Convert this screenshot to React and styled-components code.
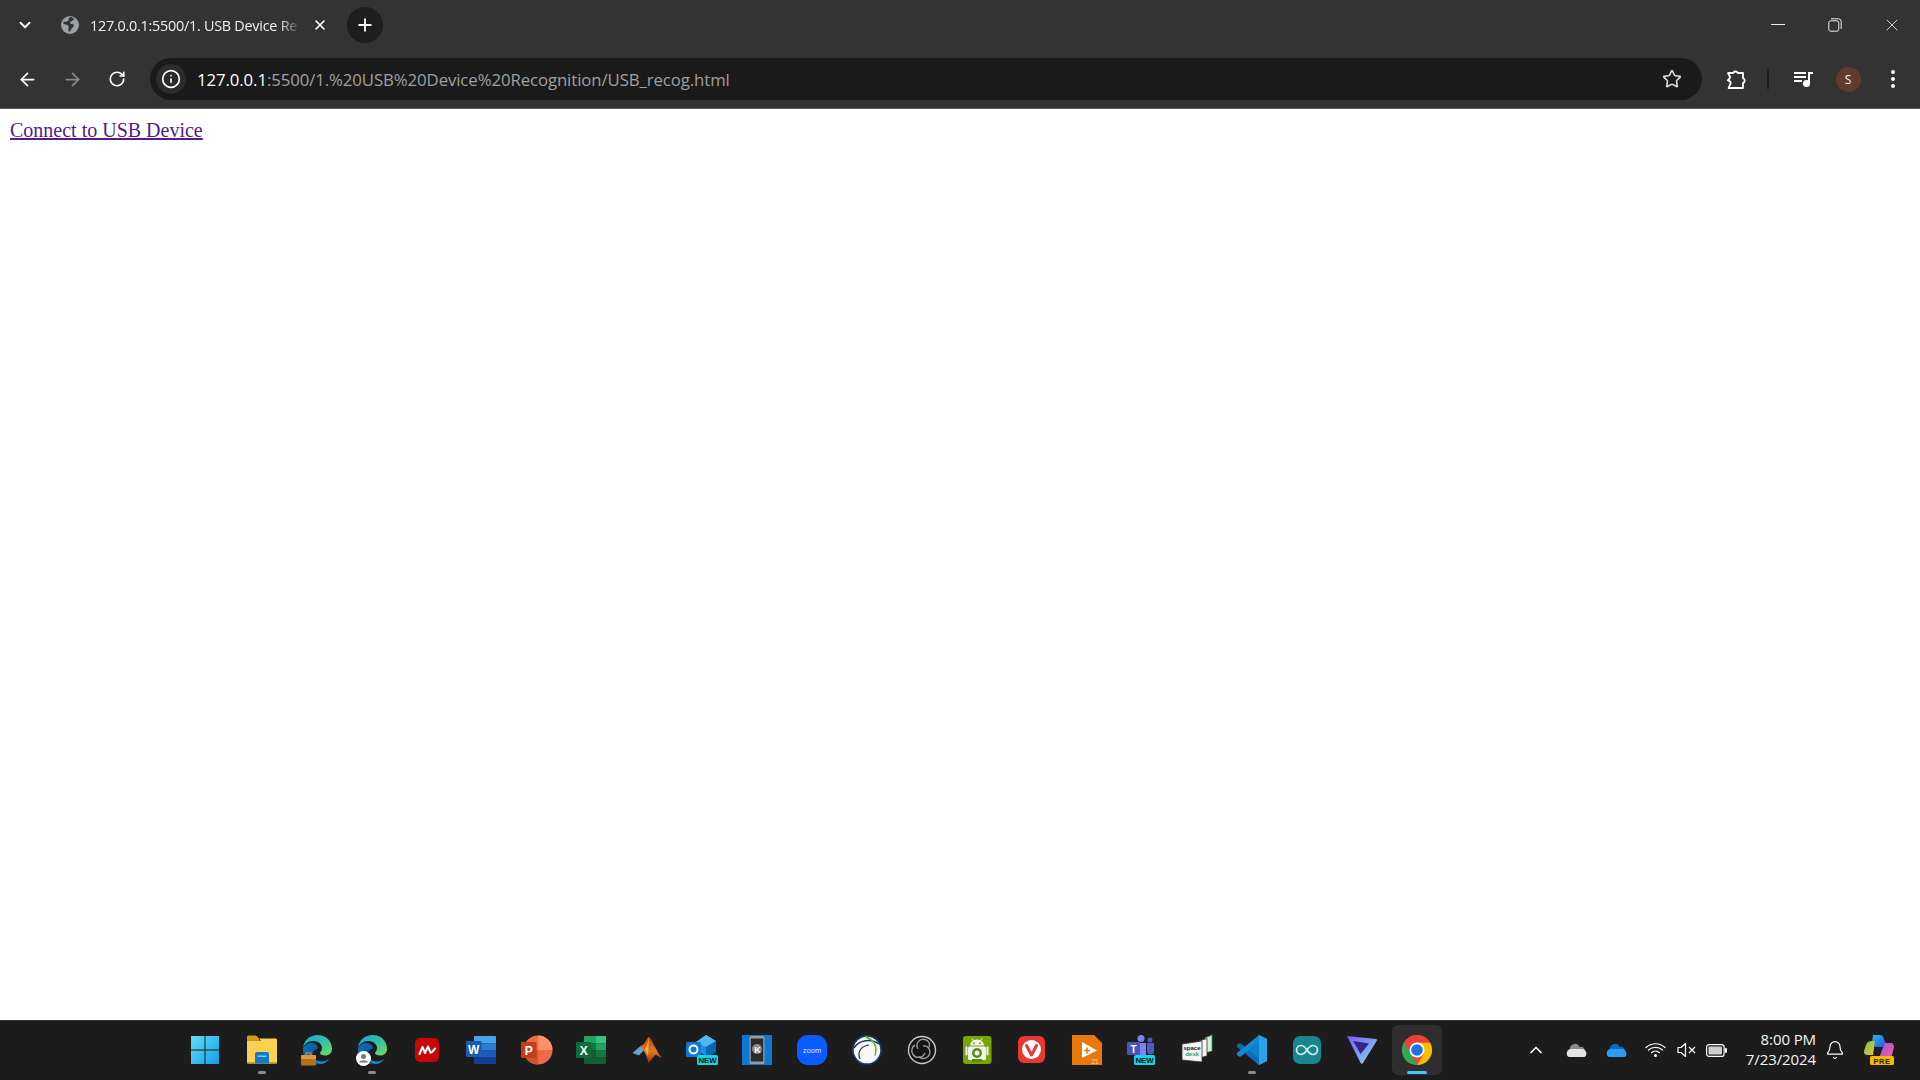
import React from "react";
import styled, { createGlobalStyle } from "styled-components";
import { ArrowLeft, ArrowRight, ChevronDown, ChevronUp, Info, Plus, RotateCw, Star, X, Bell } from "lucide-react";

const GlobalStyle = createGlobalStyle`
  html, body { margin: 0; padding: 0; height: 100%; overflow: hidden; background: #fff; }
  #root { height: 100%; }
`;

const Screen = styled.div`
  height: 1080px;
  display: flex;
  flex-direction: column;
  font-family: "Open Sans", "Noto Sans", sans-serif;
`;

const TabStrip = styled.div`
  height: 50px;
  background: #333333;
  display: flex;
  align-items: center;
  color: #fff;
`;

const StripButton = styled.div`
  width: ${(p) => p.$w || 36}px;
  height: 36px;
  margin-left: ${(p) => p.$ml || 0}px;
  flex: none;
  display: flex;
  align-items: center;
  justify-content: center;
  border-radius: 50%;
  background: ${(p) => p.$bg || "transparent"};
  color: ${(p) => p.$color || "#fff"};
`;

const Tab = styled.div`
  width: 281px;
  margin-left: 18px;
  display: flex;
  align-items: center;
  gap: 11px;
  font-size: 14.4px;
  letter-spacing: -0.25px;
`;

const TabTitle = styled.div`
  width: 211px;
  white-space: nowrap;
  color: #f0f0f0;
  -webkit-mask-image: linear-gradient(to right, #000 90%, transparent 100%);
  mask-image: linear-gradient(to right, #000 90%, transparent 100%);
`;

const WindowControls = styled.div`
  margin-left: auto;
  display: flex;
`;

const WindowButton = styled.div`
  width: 57px;
  height: 50px;
  display: flex;
  align-items: center;
  justify-content: center;
`;

const Toolbar = styled.div`
  height: 59px;
  background: #333333;
  border-bottom: 1px solid #5e5e5e;
  display: flex;
  align-items: center;
  box-sizing: border-box;
  color: #fff;
`;

const NavButton = styled.div`
  width: 45px;
  flex: none;
  display: flex;
  align-items: center;
  justify-content: center;
  color: ${(p) => p.$color || "#fff"};
`;

const NavGroup = styled.div`
  display: flex;
  padding-left: 4.5px;
  margin-right: 10.5px;
`;

const Omnibox = styled.div`
  width: 1552px;
  height: 42px;
  border-radius: 21px;
  background: #1a1a1a;
  display: flex;
  align-items: center;
  flex: none;
  padding: 0 20px 0 6px;
  box-sizing: border-box;
`;

const InfoChip = styled.div`
  width: 30px;
  height: 30px;
  border-radius: 50%;
  background: #2c2c2c;
  display: flex;
  align-items: center;
  justify-content: center;
  margin-right: 11px;
  flex: none;
`;

const Url = styled.div`
  font-size: 16.8px;
  letter-spacing: -0.1px;
  color: #a0a0a0;
  white-space: nowrap;
  flex: 1;
  b { font-weight: 400; color: #fff; }
`;

const ToolActions = styled.div`
  display: flex;
  align-items: center;
  margin-left: 12px;
`;

const ToolSlot = styled.div`
  width: ${(p) => p.$w}px;
  flex: none;
  display: flex;
  align-items: center;
  justify-content: center;
`;

const Divider = styled.div`
  width: 2px;
  height: 20px;
  background: #1c1c1c;
  margin: 0 8px 0 9px;
`;

const Avatar = styled.div`
  width: 25px;
  height: 25px;
  border-radius: 50%;
  background: #5f3b2e;
  color: #eee;
  font-size: 12px;
  display: flex;
  align-items: center;
  justify-content: center;
`;

const Page = styled.main`
  flex: 1;
  background: #fff;
  padding: 9.5px 10px;
`;

const UsbLink = styled.a`
  font-family: "Liberation Serif", serif;
  font-size: 20px;
  line-height: 22px;
  color: #551a8b;
  text-decoration: underline;
  cursor: pointer;
`;

const Taskbar = styled.footer`
  height: 60px;
  box-sizing: border-box;
  background: #1c1c1c;
  border-top: 1px solid #383838;
  display: flex;
  align-items: center;
  padding: 0 0 1px 177px;
  color: #fff;
`;

const AppSlot = styled.div`
  position: relative;
  width: 55px;
  height: 50px;
  flex: none;
  margin-right: ${(p) => p.$after || 0}px;
  display: flex;
  align-items: center;
  justify-content: center;
  border-radius: 6px;
  &::before {
    content: "";
    position: absolute;
    inset: 0 2.5px;
    border-radius: 6px;
    background: ${(p) => (p.$active ? "#2e2e2e" : "transparent")};
  }
  &::after {
    content: "";
    display: ${(p) => (p.$running || p.$active ? "block" : "none")};
    position: absolute;
    left: 50%;
    bottom: 1px;
    transform: translateX(-50%);
    width: ${(p) => (p.$active ? 20 : 8)}px;
    height: 3px;
    border-radius: 2px;
    background: ${(p) => (p.$active ? "#4cc2ff" : "#8e8e8e")};
  }
  svg { position: relative; z-index: 1; }
`;

const Tray = styled.div`
  margin-left: auto;
  display: flex;
  align-items: center;
  height: 100%;
`;

const TraySlot = styled.div`
  width: ${(p) => p.$w}px;
  flex: none;
  display: flex;
  align-items: center;
  justify-content: center;
`;

const Clock = styled.div`
  width: 80px;
  text-align: right;
  font-size: 15px;
  line-height: 20px;
  letter-spacing: -0.1px;
  color: #f4f4f4;
  margin: 0 1px 2px 4px;
`;

const Tile = ({ children, id }) => (
  <svg width="32" height="32" viewBox="0 0 32 32" data-icon={id}>
    {children}
  </svg>
);

const Globe = () => (
  <svg width="18" height="18" viewBox="0 0 18 18">
    <circle cx="9" cy="9" r="9" fill="#9aa0a6" />
    <path d="M9 1C7 3 8 5 6 5.500S2.500 5 2 7c1.500 2 3.500 1 5 2.500S6.500 13 8 16c2-1 2-3 3.500-4.500 1-1 2-1.500 1-3-1-1-3 0-3.500-1.500C8.500 5.500 12 5 13 3 11.500 1.500 10.500 1 9 1z" fill="#333" />
  </svg>
);

const Restore = () => (
  <svg width="14" height="14" viewBox="0 0 14 14" fill="none" stroke="#eee" strokeWidth="1">
    <rect x="0.800" y="2.800" width="10" height="10.400" rx="2" />
    <path d="M3 .8h7.500a2.700 2.700 0 0 1 2.700 2.700V11" />
  </svg>
);

const Puzzle = () => (
  <svg width="22" height="22" viewBox="0 0 22 22" fill="none" stroke="#fff" strokeWidth="1.800" strokeLinejoin="round">
    <path d="M3 5h5.200a2.500 2.500 0 0 1 4.600 0H18v5.200a2.400 2.400 0 0 1 0 4.600V20H3.600l1.900-4.400c.4-1.200-.4-2.300-1.400-2.700L2.800 12.300 4.800 10.200C5.400 9.300 5 8.200 4.400 7.800z" />
  </svg>
);

const MediaQueue = () => (
  <svg width="20" height="18" viewBox="0 0 20 18" fill="#fff">
    <rect x="0" y="2" width="12" height="2" />
    <rect x="0" y="6" width="12" height="2" />
    <rect x="0" y="10" width="8" height="2" />
    <rect x="14" y="2" width="5" height="2" />
    <rect x="14" y="2" width="2" height="11" />
    <circle cx="12.500" cy="13.500" r="3.500" />
  </svg>
);

const Dots = () => (
  <svg width="6" height="20" viewBox="0 0 6 20" fill="#fff">
    <circle cx="3" cy="3" r="2" />
    <circle cx="3" cy="10" r="2" />
    <circle cx="3" cy="17" r="2" />
  </svg>
);

const WindowsLogo = () => (
  <Tile id="windows">
    <defs>
      <linearGradient id="win" x1="0" y1="0" x2="1" y2="1">
        <stop offset="0" stopColor="#62dcf6" />
        <stop offset="1" stopColor="#139fe8" />
      </linearGradient>
    </defs>
    <path d="M2 2h13.500v13.500H2zM16.500 2H30v13.500H16.500zM2 16.500h13.500V30H2zM16.500 16.500H30V30H16.500z" fill="url(#win)" />
  </Tile>
);

const Folder = () => (
  <Tile id="folder">
    <path d="M1 3a1.500 1.500 0 0 1 1.500-1.500H10l3 3v2H1z" fill="#d99a12" />
    <path d="M1 6.500h14L13 4.500h16.500A1.500 1.500 0 0 1 31 6v22a1.500 1.500 0 0 1-1.500 1.500h-27A1.500 1.500 0 0 1 1 28z" fill="#fcd053" />
    <rect x="1" y="28" width="30" height="1.500" fill="#d6a12a" />
    <path d="M9 20a2 2 0 0 1 2-2h10a2 2 0 0 1 2 2v9.500H9z" fill="#1578c9" />
    <rect x="11.500" y="21.500" width="9" height="1.500" fill="#7cc4f0" />
  </Tile>
);

const Edge = ({ badge }) => (
  <Tile id="edge">
    <defs>
      <linearGradient id={`edgeA${badge}`} x1="0" y1="0" x2="1" y2="1">
        <stop offset="0" stopColor="#1ba1d8" />
        <stop offset=".55" stopColor="#35c1a3" />
        <stop offset="1" stopColor="#7bdc5a" />
      </linearGradient>
      <linearGradient id={`edgeB${badge}`} x1="0" y1="0" x2="1" y2="1">
        <stop offset="0" stopColor="#0d6fb8" />
        <stop offset="1" stopColor="#0c4e91" />
      </linearGradient>
    </defs>
    <path d="M2 14C3 6 9 1 16.500 1 25 1 31 7 31 15c0 4-3 6.500-7 6.500-3 0-5-1-5-2.500 0-1 2-2 2-5 0-4-4-7-8.500-7C7 7 3.500 10 2 14z" fill={`url(#edgeA${badge})`} />
    <path d="M2 14c2-3.500 5-5 8-5 4 0 7 2.500 7 5.500-2 .5-5.500 2.500-5.500 7 0 4 3 7.500 7.500 8.500C9 31.500 1 25 2 14z" fill={`url(#edgeB${badge})`} />
    <path d="M19 30c-4-1-6.500-4-6.500-8 0 3 3.500 5.500 8 5.500 3.500 0 6-1 8-3-2 3.500-5.500 5.500-9.500 5.500z" fill="#1a8fd8" />
    {badge === "work" && (
      <>
        <rect x="0" y="21" width="15" height="10.500" rx="1" fill="#b5701a" />
        <rect x="0" y="21" width="15" height="4" rx="1" fill="#de9a35" />
        <rect x="5" y="19" width="5" height="2.500" fill="none" stroke="#de9a35" strokeWidth="1" />
      </>
    )}
    {badge === "profile" && (
      <>
        <circle cx="7.500" cy="24.500" r="7.500" fill="#fff" />
        <circle cx="7.500" cy="22.500" r="2.500" fill="#777" />
        <path d="M3 28.500c1-3 8-3 9 0z" fill="#777" />
      </>
    )}
  </Tile>
);

const RedTile = () => (
  <Tile id="red">
    <rect x="4" y="4" width="24" height="24" rx="5" fill="#c80808" />
    <path d="M8.500 20l3-7 2.500 6 3-6.500 2.500 6c1 1 3-2 4.500-4" fill="none" stroke="#fff" strokeWidth="2" strokeLinecap="round" strokeLinejoin="round" />
  </Tile>
);

const Word = () => (
  <Tile id="word">
    <path d="M9 2h20a1 1 0 0 1 1 1v6.500H8V3a1 1 0 0 1 1-1z" fill="#41a5ee" />
    <rect x="8" y="9.500" width="22" height="7" fill="#2b7cd3" />
    <rect x="8" y="16.500" width="22" height="7" fill="#185abd" />
    <path d="M8 23.500h22V29a1 1 0 0 1-1 1H9a1 1 0 0 1-1-1z" fill="#103f91" />
    <rect x="0" y="7" width="15.500" height="16" rx="1" fill="#1a5bb8" />
    <text x="7.700" y="19.500" fontFamily="Liberation Sans, sans-serif" fontWeight="700" fontSize="12" textAnchor="middle" fill="#fff">W</text>
  </Tile>
);

const PowerPoint = () => (
  <Tile id="powerpoint">
    <circle cx="17" cy="16" r="14.500" fill="#ed6c47" />
    <path d="M17 1.500A14.500 14.500 0 0 1 31.500 16H17z" fill="#ff8f6b" />
    <path d="M17 30.500a14.500 14.500 0 0 1-12-6.500V16h12z" fill="#d35230" />
    <rect x="0" y="8" width="15.500" height="16" rx="1" fill="#c43e1c" />
    <text x="7.700" y="20.500" fontFamily="Liberation Sans, sans-serif" fontWeight="700" fontSize="12" textAnchor="middle" fill="#fff">P</text>
  </Tile>
);

const Excel = () => (
  <Tile id="excel">
    <path d="M9 2h11v7.500H8V3a1 1 0 0 1 1-1z" fill="#21a366" />
    <path d="M20 2h9a1 1 0 0 1 1 1v6.500H20z" fill="#33c481" />
    <rect x="8" y="9.500" width="12" height="7" fill="#107c41" />
    <rect x="20" y="9.500" width="10" height="7" fill="#21a366" />
    <rect x="8" y="16.500" width="12" height="7" fill="#185c37" />
    <rect x="20" y="16.500" width="10" height="7" fill="#107c41" />
    <path d="M8 23.500h22V29a1 1 0 0 1-1 1H9a1 1 0 0 1-1-1z" fill="#185c37" />
    <rect x="0" y="8" width="15.500" height="16" rx="1" fill="#0f6b3a" />
    <text x="7.700" y="20.500" fontFamily="Liberation Sans, sans-serif" fontWeight="700" fontSize="12" textAnchor="middle" fill="#fff">X</text>
  </Tile>
);

const Matlab = () => (
  <Tile id="matlab">
    <defs>
      <linearGradient id="mat" x1="0" y1="0" x2="0" y2="1">
        <stop offset="0" stopColor="#c9401a" />
        <stop offset=".55" stopColor="#e07a20" />
        <stop offset="1" stopColor="#9c2a18" />
      </linearGradient>
    </defs>
    <path d="M1.500 19l8-7 4.500 3-6 6.500z" fill="#5ba3d9" />
    <path d="M9.500 12c3-1 4.500-3 5.500-5.500C16 4.500 17 3 18 3c1.500 0 5 10 12.700 21-3-1-4.500-3-6-3-2 1-4 5-7.200 8-1-4.500-3-10.500-8-17z" fill="url(#mat)" />
    <path d="M14 15c2-3 3-7 4-12-.5 6-.5 12-1 19z" fill="#f0b23c" />
  </Tile>
);

const Outlook = () => (
  <Tile id="outlook">
    <path d="M10 8l10-7 10 6v9L20 22 10 16z" fill="#1a8fdc" />
    <path d="M20 1l10 6-10 6-10-5z" fill="#50b8f0" />
    <path d="M20 13l10-6v11l-10 6z" fill="#0c65b5" />
    <rect x="0" y="8" width="15" height="15" rx="1.500" fill="#0f78d4" />
    <circle cx="7.500" cy="15.500" r="4" fill="none" stroke="#fff" strokeWidth="2" />
    <rect x="11" y="21" width="21" height="10" rx="1.500" fill="#19d3e0" />
    <text x="21.500" y="29.200" fontFamily="Liberation Sans, sans-serif" fontWeight="700" fontSize="7.800" textAnchor="middle" fill="#111">NEW</text>
  </Tile>
);

const KdePhone = () => (
  <Tile id="kde">
    <rect x="1" y="1" width="30" height="30" fill="#0a78d4" />
    <rect x="8.500" y="2" width="15" height="28" rx="1.500" fill="#9a9a9a" />
    <rect x="9.800" y="4.500" width="12.400" height="23" fill="#2a2a2a" />
    <circle cx="16" cy="15" r="5" fill="#8a8a8a" />
    <text x="16.500" y="18.500" fontFamily="Liberation Sans, sans-serif" fontWeight="700" fontSize="9" textAnchor="middle" fill="#fff">K</text>
  </Tile>
);

const Zoom = () => (
  <Tile id="zoom">
    <rect x="1" y="1" width="30" height="30" rx="11" fill="#0b5cff" />
    <text x="16" y="18.500" fontFamily="Liberation Sans, sans-serif" fontSize="7.500" textAnchor="middle" fill="#dfe8ff">zoom</text>
  </Tile>
);

const CircleApp = () => (
  <Tile id="circle">
    <circle cx="16" cy="16" r="14.200" fill="#f8f8f8" stroke="#17375e" strokeWidth="1.800" />
    <path d="M3 14C8 6 20 4 28 10" fill="none" stroke="#17375e" strokeWidth="1.500" />
    <path d="M14 2.500c8 3 13 9 10 19" fill="none" stroke="#5cb531" strokeWidth="1.500" />
    <path d="M9 25c-3-7 1-13 9-14" fill="none" stroke="#17375e" strokeWidth="1.200" />
  </Tile>
);

const Obs = () => (
  <Tile id="obs">
    <circle cx="16" cy="16" r="13.500" fill="#141414" stroke="#c8c8c8" strokeWidth="1.400" />
    <path d="M12 15C9 10 13 4 19 5.500c4 1 5.500 5 4 8" fill="none" stroke="#9a9a9a" strokeWidth="1.400" />
    <path d="M17 12c6-1 9 6 5 10.500-3 3-7 2.500-9.500 0" fill="none" stroke="#9a9a9a" strokeWidth="1.400" />
    <path d="M19 19c-2 5-9 6-12 1.500-2.500-3.500-1-8 2-9.500" fill="none" stroke="#9a9a9a" strokeWidth="1.400" />
  </Tile>
);

const AndroidCam = () => (
  <Tile id="androidcam">
    <rect x="2" y="2" width="28.500" height="28" rx="3" fill="#78a800" />
    <path d="M11 4.500l2 3M21 4.500l-2 3" stroke="#f2f2f2" strokeWidth="1" />
    <path d="M9 11.500a7 6 0 0 1 14 0z" fill="#f2f2f2" />
    <circle cx="13" cy="9.200" r="1" fill="#78a800" />
    <circle cx="19" cy="9.200" r="1" fill="#78a800" />
    <rect x="7" y="12.500" width="18" height="13.500" rx="1.500" fill="#f2f2f2" />
    <rect x="4.500" y="12.500" width="2" height="9" rx="1" fill="#f2f2f2" />
    <rect x="25.500" y="12.500" width="2" height="9" rx="1" fill="#f2f2f2" />
    <circle cx="16" cy="19" r="5" fill="#5a8a14" />
    <circle cx="16" cy="19" r="2.500" fill="#f2f2f2" />
    <rect x="11" y="25" width="10" height="3" fill="#5a8a14" />
  </Tile>
);

const Vivaldi = () => (
  <Tile id="vivaldi">
    <rect x="2" y="2" width="27" height="27" rx="6" fill="#e53935" />
    <circle cx="15.500" cy="15.500" r="9.500" fill="#fff" />
    <path d="M10.500 11.500L15.500 21l5-9.500" fill="none" stroke="#e53935" strokeWidth="3" strokeLinecap="round" strokeLinejoin="round" />
  </Tile>
);

const OrangePlay = () => (
  <Tile id="orangeplay">
    <path d="M1 1h22l8 8v22H1z" fill="#e8780a" />
    <path d="M11 8l15 8.500L11 24z" fill="#fff" />
    <path d="M13 16.500h6M16 13.500v6" stroke="#e8780a" strokeWidth="1.600" />
    <text x="24" y="30" fontFamily="Liberation Sans, sans-serif" fontSize="6.500" textAnchor="middle" fill="#f6d7b0">21</text>
  </Tile>
);

const Teams = () => (
  <Tile id="teams">
    <circle cx="15" cy="4.500" r="3.500" fill="#7b83eb" />
    <circle cx="24" cy="6" r="2.500" fill="#5059c9" />
    <path d="M12 9h8v11a4 4 0 0 1-8 0z" fill="#7b83eb" />
    <path d="M21 9h7v8a3.500 3.500 0 0 1-7 0z" fill="#5059c9" />
    <rect x="1" y="8" width="13" height="13" rx="1" fill="#4b53bc" />
    <text x="7.500" y="18.500" fontFamily="Liberation Sans, sans-serif" fontWeight="700" fontSize="10" textAnchor="middle" fill="#fff">T</text>
    <rect x="8" y="21" width="21" height="10" rx="1.500" fill="#19d3e0" />
    <text x="18.500" y="29.200" fontFamily="Liberation Sans, sans-serif" fontWeight="700" fontSize="7.800" textAnchor="middle" fill="#111">NEW</text>
  </Tile>
);

const Spacedesk = () => (
  <Tile id="spacedesk">
    <path d="M24 4l7-3v16l-7 2z" fill="#d8eedc" stroke="#2f8f4f" strokeWidth=".800" />
    <path d="M18 7l8-2.500V22l-8 2z" fill="#f4f4f4" stroke="#333" strokeWidth=".800" />
    <path d="M1 10l20-3v21L1 26z" fill="#f4f4f4" stroke="#333" strokeWidth=".800" />
    <text x="11" y="16" fontFamily="Liberation Sans, sans-serif" fontWeight="700" fontSize="6" textAnchor="middle" fill="#222">space</text>
    <text x="11" y="22" fontFamily="Liberation Sans, sans-serif" fontWeight="700" fontSize="6" textAnchor="middle" fill="#2f9f5f">desk</text>
  </Tile>
);

const VsCode = () => (
  <Tile id="vscode">
    <path d="M23 1l8 4v22l-8 4L9 17z" fill="#0f7ecb" />
    <path d="M23 1l8 4v22l-8 4z" fill="#2ba1ec" />
    <path d="M1 11l3-2 19 15v7L1 13z" fill="#0a6eb4" />
    <path d="M1 21l3 2L23 8V1L1 19z" fill="#1488d4" />
  </Tile>
);

const Arduino = () => (
  <Tile id="arduino">
    <rect x="2" y="2" width="28" height="28" rx="7" fill="#17868f" />
    <path d="M16 16c-2-3-4-4.500-6-4.500a4.500 4.500 0 0 0 0 9c2 0 4-1.500 6-4.500 2-3 4-4.500 6-4.500a4.500 4.500 0 0 1 0 9c-2 0-4-1.500-6-4.500z" fill="none" stroke="#d6ecec" strokeWidth="1.700" />
  </Tile>
);

const ProtonVpn = () => (
  <Tile id="protonvpn">
    <defs>
      <linearGradient id="pv" x1="0" y1="0" x2="1" y2="1">
        <stop offset="0" stopColor="#7d5aff" />
        <stop offset=".6" stopColor="#7aa8f5" />
        <stop offset="1" stopColor="#9ff0e6" />
      </linearGradient>
    </defs>
    <path d="M1 2l29 3c1 .3 1.300 1 .8 1.700L17 29c-1 1-2 1-2.500-.2z" fill="url(#pv)" />
    <path d="M7 7l16 2.500L14.500 20z" fill="#34277f" />
  </Tile>
);

const Chrome = () => (
  <Tile id="chrome">
    <circle cx="16" cy="16" r="15" fill="#e8453c" />
    <path d="M16 31A15 15 0 0 1 3 8.500L10 20z" fill="#34a853" />
    <path d="M29 8.500A15 15 0 0 1 16 31l7-11.500H16V8.500z" fill="#fbbc04" />
    <path d="M3 8.500A15 15 0 0 1 29 8.500H16z" fill="#ea4335" />
    <circle cx="16" cy="16" r="7.500" fill="#fff" />
    <circle cx="16" cy="16" r="5.800" fill="#1a73e8" />
  </Tile>
);

const CopilotPre = () => (
  <Tile id="copilot">
    <defs>
      <linearGradient id="copA" x1="0" y1="0" x2="1" y2="1">
        <stop offset="0" stopColor="#2bb6e8" />
        <stop offset="1" stopColor="#2b4ee0" />
      </linearGradient>
      <linearGradient id="copB" x1="0" y1="0" x2="1" y2="1">
        <stop offset="0" stopColor="#62c65a" />
        <stop offset="1" stopColor="#f7c12b" />
      </linearGradient>
      <linearGradient id="copC" x1="0" y1="0" x2="1" y2="1">
        <stop offset="0" stopColor="#a552e0" />
        <stop offset="1" stopColor="#f0609a" />
      </linearGradient>
    </defs>
    <path d="M10 1h7c2 0 3 1 4 4l3 8H12L9 9z" fill="url(#copA)" />
    <path d="M8 7h4l-2 14H4c-2 0-3.500-2-3-4l2-6c1-3 3-4 5-4z" fill="url(#copB)" />
    <path d="M22 9h6c2 0 3 2 3 4l-2 8c-.5 2-2 3-4 3h-9l3-8z" fill="url(#copC)" />
    <rect x="7" y="22" width="24" height="9" rx="1.500" fill="#f7b500" />
    <text x="19" y="29.500" fontFamily="Liberation Sans, sans-serif" fontWeight="700" fontSize="7.500" letterSpacing=".6" textAnchor="middle" fill="#222">PRE</text>
  </Tile>
);

const CloudIcon = ({ top, bottom }) => (
  <svg width="21" height="14" viewBox="0 0 21 14">
    <path d="M4 7a5 5 0 0 1 9.500-3A4 4 0 0 1 19 8H4z" fill={top} />
    <path d="M4 6h12a3.500 3.500 0 0 1 3 1.500c2 1 2 6.500-1 6.500H3.500C0 14-.500 7 4 6z" fill={bottom} />
  </svg>
);

const WifiIcon = () => (
  <svg width="21" height="16" viewBox="0 0 21 16" fill="none" stroke="#fff" strokeWidth="1.200" strokeLinecap="round">
    <path d="M1 5.500c5.500-5 13.500-5 19 0" />
    <path d="M3.500 8c4-3.500 10-3.500 14 0" />
    <path d="M6.500 10.700c2.300-2 5.700-2 8 0" />
    <circle cx="10.500" cy="13.500" r="1.500" fill="#fff" stroke="none" />
  </svg>
);

const MuteIcon = () => (
  <svg width="20" height="16" viewBox="0 0 20 16" fill="none" stroke="#fff" strokeWidth="1.200" strokeLinejoin="round">
    <path d="M1 5.500h3L8.500 1.500v13L4 10.500H1z" />
    <path d="M12 5l6 6M18 5l-6 6" />
  </svg>
);

const BatteryIcon = () => (
  <svg width="21" height="13" viewBox="0 0 21 13" fill="none">
    <rect x=".6" y=".6" width="17.500" height="11.800" rx="2.500" stroke="#fff" strokeWidth="1.200" />
    <rect x="2.500" y="2.500" width="13.500" height="8" rx="1" fill="#cfcfcf" />
    <rect x="19" y="4" width="2" height="5" rx="1" fill="#fff" />
  </svg>
);

const apps = [
  { key: "win", el: <WindowsLogo />, after: 2.5 },
  { key: "folder", el: <Folder />, running: true },
  { key: "edgeWork", el: <Edge badge="work" /> },
  { key: "edgeProfile", el: <Edge badge="profile" />, running: true },
  { key: "red", el: <RedTile /> },
  { key: "word", el: <Word /> },
  { key: "ppt", el: <PowerPoint /> },
  { key: "excel", el: <Excel /> },
  { key: "matlab", el: <Matlab /> },
  { key: "outlook", el: <Outlook /> },
  { key: "kde", el: <KdePhone /> },
  { key: "zoom", el: <Zoom /> },
  { key: "circle", el: <CircleApp /> },
  { key: "obs", el: <Obs /> },
  { key: "android", el: <AndroidCam /> },
  { key: "vivaldi", el: <Vivaldi /> },
  { key: "play", el: <OrangePlay /> },
  { key: "teams", el: <Teams /> },
  { key: "spacedesk", el: <Spacedesk /> },
  { key: "vscode", el: <VsCode />, running: true },
  { key: "arduino", el: <Arduino /> },
  { key: "proton", el: <ProtonVpn /> },
  { key: "chrome", el: <Chrome />, active: true },
];

const App = () => {
  return (
    <Screen>
      <GlobalStyle />
      <TabStrip>
        <StripButton $ml={7}>
          <ChevronDown size={18} strokeWidth={2.5} />
        </StripButton>
        <Tab>
          <Globe />
          <TabTitle>127.0.0.1:5500/1. USB Device Re</TabTitle>
          <X size={16} strokeWidth={2.4} />
        </Tab>
        <StripButton $bg="#1e1e1e" $ml={5}>
          <Plus size={20} strokeWidth={2.2} />
        </StripButton>
        <WindowControls>
          <WindowButton>
            <svg width="14" height="2" viewBox="0 0 14 2">
              <rect width="14" height="1" fill="#eee" />
            </svg>
          </WindowButton>
          <WindowButton>
            <Restore />
          </WindowButton>
          <WindowButton>
            <X size={20} strokeWidth={1} color="#eee" />
          </WindowButton>
        </WindowControls>
      </TabStrip>
      <Toolbar>
        <NavGroup>
          <NavButton>
            <ArrowLeft size={21} strokeWidth={2} />
          </NavButton>
          <NavButton $color="#8a8a8a">
            <ArrowRight size={21} strokeWidth={2} />
          </NavButton>
          <NavButton>
            <RotateCw size={18} strokeWidth={2.2} />
          </NavButton>
        </NavGroup>
        <Omnibox>
          <InfoChip>
            <Info size={20} strokeWidth={2} color="#fff" />
          </InfoChip>
          <Url>
            <b>127.0.0.1</b>:5500/1.%20USB%20Device%20Recognition/USB_recog.html
          </Url>
          <Star size={20} strokeWidth={2} color="#d8d8d8" />
        </Omnibox>
        <ToolActions>
          <ToolSlot $w={44}>
            <Puzzle />
          </ToolSlot>
          <Divider />
          <ToolSlot $w={54}>
            <MediaQueue />
          </ToolSlot>
          <ToolSlot $w={34}>
            <Avatar>S</Avatar>
          </ToolSlot>
          <ToolSlot $w={56}>
            <Dots />
          </ToolSlot>
        </ToolActions>
      </Toolbar>
      <Page>
        <UsbLink>Connect to USB Device</UsbLink>
      </Page>
      <Taskbar>
        {apps.map((app) => (
          <AppSlot key={app.key} $running={app.running} $active={app.active} $after={app.after}>
            {app.el}
          </AppSlot>
        ))}
        <Tray>
          <TraySlot $w={40}>
            <ChevronUp size={20} strokeWidth={2} />
          </TraySlot>
          <TraySlot $w={40}>
            <CloudIcon top="#8a8a8a" bottom="#e4e4e4" />
          </TraySlot>
          <TraySlot $w={40}>
            <CloudIcon top="#0f6cbd" bottom="#2a9df0" />
          </TraySlot>
          <TraySlot $w={38}>
            <WifiIcon />
          </TraySlot>
          <TraySlot $w={26}>
            <MuteIcon />
          </TraySlot>
          <TraySlot $w={32}>
            <BatteryIcon />
          </TraySlot>
          <Clock>
            8:00 PM
            <br />
            7/23/2024
          </Clock>
          <TraySlot $w={36}>
            <Bell size={20} strokeWidth={1.4} />
          </TraySlot>
          <TraySlot $w={52}>
            <CopilotPre />
          </TraySlot>
          <TraySlot $w={15} />
        </Tray>
      </Taskbar>
    </Screen>
  );
};

export default App;
